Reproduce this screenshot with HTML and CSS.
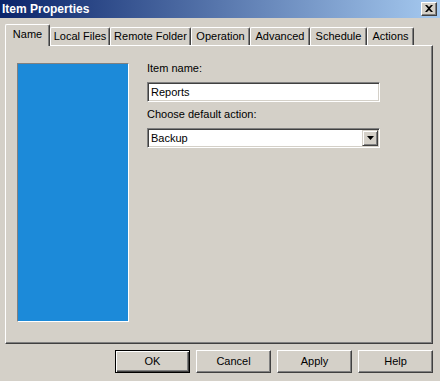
FILE: index.html
```html
<!DOCTYPE html>
<html>
<head>
<meta charset="utf-8">
<title>Item Properties</title>
<link rel="stylesheet" href="styles.css">
</head>
<body>
<div class="window">
  <div class="titlebar">
    <span class="title">Item Properties</span>
    <div class="close">
      <svg width="8" height="7" viewBox="0 0 8 7"><path d="M0 0h2l2 2 2-2h2L5 3.5 8 7H6L4 5 2 7H0l3-3.5z" fill="#000"/></svg>
    </div>
  </div>
  <div class="content">
    <div class="tabs">
      <div class="tab active t1">Name</div>
      <div class="tab t2">Local Files</div>
      <div class="tab t3">Remote Folder</div>
      <div class="tab t4">Operation</div>
      <div class="tab t5">Advanced</div>
      <div class="tab t6">Schedule</div>
      <div class="tab t7">Actions</div>
    </div>
    <div class="panel">
      <div class="preview"></div>
      <div class="form">
        <div class="label">Item name:</div>
        <div class="edit">Reports</div>
        <div class="label second">Choose default action:</div>
        <div class="combo">
          <span class="combo-text">Backup</span>
          <span class="combo-btn"><svg width="7" height="4" viewBox="0 0 7 4"><path d="M0 0h7L3.5 4z" fill="#000"/></svg></span>
        </div>
      </div>
    </div>
    <div class="buttons">
      <div class="btn default"><span>OK</span></div>
      <div class="btn"><span>Cancel</span></div>
      <div class="btn"><span>Apply</span></div>
      <div class="btn"><span>Help</span></div>
    </div>
  </div>
</div>
</body>
</html>
```

FILE: styles.css
```css
html, body {
  margin: 0;
  padding: 0;
  background: #d4d0c8;
}
body {
  font-family: "Liberation Sans", Arial, sans-serif;
  font-size: 11px;
  color: #000;
}
.window {
  width: 440px;
  height: 381px;
  background: #d4d0c8;
  overflow: hidden;
}
.titlebar {
  height: 18px;
  background: linear-gradient(to right, #0a246a, #a6caf0);
  display: flex;
  align-items: center;
  justify-content: space-between;
  padding: 0 3px 0 2px;
}
.title {
  color: #fff;
  font-weight: bold;
  font-size: 12px;
  line-height: 18px;
}
.close {
  width: 16px;
  height: 14px;
  box-sizing: border-box;
  background: #d4d0c8;
  border-top: 1px solid #fff;
  border-left: 1px solid #fff;
  border-right: 1px solid #404040;
  border-bottom: 1px solid #404040;
  box-shadow: inset -1px -1px #808080;
  display: flex;
  align-items: center;
  justify-content: center;
  padding: 0 1px 1px 0;
}
.content {
  padding: 6px 0 0 5px;
}
.tabs {
  display: flex;
  align-items: flex-end;
  height: 21px;
}
.tab {
  box-sizing: border-box;
  height: 18px;
  padding-top: 2px;
  line-height: 13px;
  text-align: center;
  background: #d4d0c8;
  border-top: 1px solid #fff;
  border-left: 1px solid #fff;
  border-right: 1px solid #404040;
  box-shadow: inset -1px 0 #808080;
  border-top-left-radius: 2px;
  border-top-right-radius: 2px;
}
.tab.active {
  height: 22px;
  padding-top: 3px;
  margin-bottom: -1px;
  position: relative;
  z-index: 1;
}
.t1 { width: 45px; }
.t2 { width: 60px; }
.t3 { width: 81px; }
.t4 { width: 59px; }
.t5 { width: 60px; }
.t6 { width: 57px; }
.t7 { width: 47px; }
.panel {
  box-sizing: border-box;
  width: 428px;
  height: 299px;
  border-top: 1px solid #fff;
  border-left: 1px solid #fff;
  border-right: 1px solid #404040;
  border-bottom: 1px solid #404040;
  box-shadow: inset -1px -1px #808080;
  padding: 16px 0 0 11px;
  display: flex;
  gap: 18px;
}
.preview {
  box-sizing: border-box;
  width: 112px;
  height: 259px;
  margin-top: 1px;
  background: #1c8ad9;
  border-top: 1px solid #808080;
  border-left: 1px solid #808080;
  border-right: 1px solid #fff;
  border-bottom: 1px solid #fff;
}
.form {
  width: 233px;
  display: flex;
  flex-direction: column;
}
.label {
  line-height: 13px;
  height: 13px;
}
.label.second {
  margin-top: 6px;
}
.edit, .combo {
  box-sizing: border-box;
  height: 20px;
  margin-top: 7px;
  background: #fff;
  border-top: 1px solid #808080;
  border-left: 1px solid #808080;
  border-right: 1px solid #fff;
  border-bottom: 1px solid #fff;
  box-shadow: inset 1px 1px #404040, inset -1px -1px #d4d0c8;
  line-height: 18px;
}
.edit {
  padding-left: 3px;
}
.combo {
  display: flex;
  align-items: center;
  padding: 1px 1px 1px 3px;
}
.combo-text {
  flex: 1;
  line-height: 16px;
}
.combo-btn {
  box-sizing: border-box;
  width: 16px;
  height: 16px;
  background: #d4d0c8;
  border-top: 1px solid #d4d0c8;
  border-left: 1px solid #d4d0c8;
  border-right: 1px solid #404040;
  border-bottom: 1px solid #404040;
  box-shadow: inset 1px 1px #fff, inset -1px -1px #808080;
  display: flex;
  align-items: center;
  justify-content: center;
}
.buttons {
  display: flex;
  justify-content: flex-end;
  gap: 6px;
  width: 428px;
  margin-top: 6px;
}
.btn {
  box-sizing: border-box;
  width: 75px;
  height: 23px;
  background: #d4d0c8;
  border-top: 1px solid #fff;
  border-left: 1px solid #fff;
  border-right: 1px solid #404040;
  border-bottom: 1px solid #404040;
  box-shadow: inset -1px -1px #808080;
  display: flex;
  align-items: center;
  justify-content: center;
  line-height: 13px;
}
.btn.default {
  border: 1px solid #000;
  box-shadow: inset 1px 1px #fff, inset -1px -1px #404040, inset -2px -2px #808080;
}
```
